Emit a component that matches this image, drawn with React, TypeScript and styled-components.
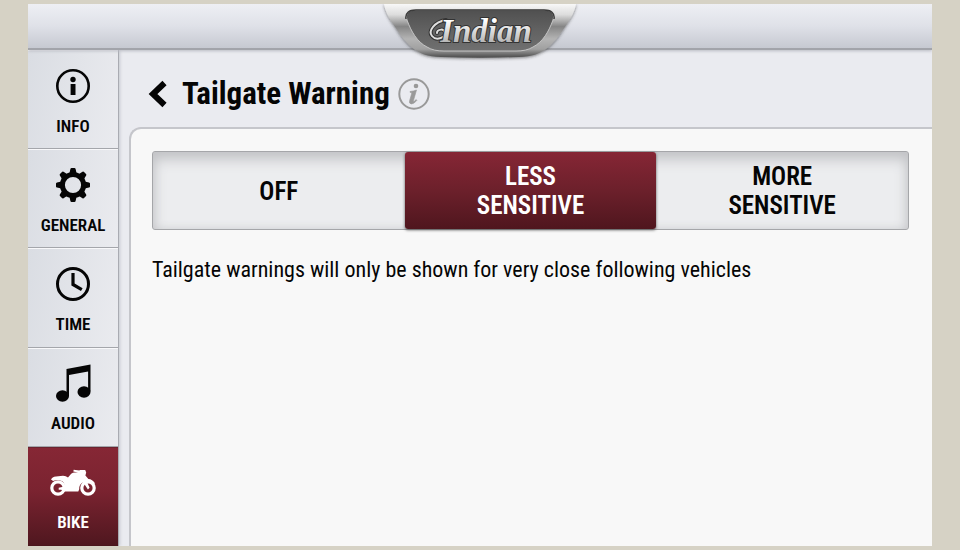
import React, { useState } from "react";
import styled, { createGlobalStyle, css } from "styled-components";

const GlobalStyle = createGlobalStyle`
  *, *::before, *::after { box-sizing: border-box; }
  body {
    margin: 0;
    background: #d6d2c5;
    color: #050505;
    font-family: "Roboto Condensed", "Arial Narrow", "Roboto", sans-serif;
  }
  button { font: inherit; color: inherit; border: 0; background: none; padding: 0; cursor: pointer; }
`;

const Page = styled.div`
  min-height: 100vh;
  padding: 4px 28px;
  display: flex;
`;

const Device = styled.div`
  flex: 1;
  min-width: 0;
  display: flex;
  flex-direction: column;
  overflow: hidden;
  background: #eaebf0;
`;

const TopBar = styled.header`
  position: relative;
  z-index: 1;
  height: 46px;
  display: flex;
  justify-content: center;
  background: linear-gradient(#eeeff4, #dfe1e8 50%, #c6c9d1);
  border-bottom: 2px solid #a2a4aa;
  box-shadow: 0 1px 3px #b9bbc2;
`;

const Badge = styled.svg`
  flex: none;
  width: 204px;
  height: 60px;
  overflow: visible;
`;

const Body = styled.div`
  flex: 1;
  display: flex;
`;

const Sidebar = styled.nav`
  flex: none;
  width: 91px;
  display: flex;
  flex-direction: column;
  border-right: 1px solid #a9abb2;
  box-shadow: 1px 0 3px #c6c8cf;
`;

const NavButton = styled.button<{ $active?: boolean }>`
  flex: 1;
  display: flex;
  flex-direction: column;
  align-items: center;
  justify-content: center;
  gap: 10px;
  padding-top: 2px;
  font-size: 17px;
  line-height: 20px;
  font-weight: 600;
  background: linear-gradient(100deg, #dadde3, #eaebef);
  border-top: 1px solid #f8f8fa;
  border-bottom: 1px solid #a4a6ab;
  ${(p) =>
    p.$active &&
    css`
      color: #fff;
      background: linear-gradient(#862735, #7a2330 45%, #4f171f);
      border-top-color: #6b2430;
      border-bottom-color: #4b161d;
    `}
`;

const NavIcon = styled.svg`
  width: 46px;
  height: 40px;
`;

const Main = styled.main`
  flex: 1;
  min-width: 0;
  display: flex;
  flex-direction: column;
  padding-left: 10px;
`;

const TitleBar = styled.div`
  height: 77px;
  display: flex;
  align-items: center;
  padding: 10px 18px 0;
`;

const IconButton = styled.button`
  display: flex;
`;

const Title = styled.h1`
  margin: 0 8px 0 15px;
  font-size: 31px;
  line-height: 40px;
  font-weight: 700;
`;

const Panel = styled.section`
  flex: 1;
  padding: 22px 23px 22px 21px;
  background: #f8f8f8;
  border: 2px solid #c5c6cb;
  border-width: 2px 0 0 2px;
  border-radius: 12px 0 0 0;
`;

const Segments = styled.div`
  display: grid;
  grid-template-columns: repeat(3, 1fr);
  height: 79px;
  border: 1px solid #a5a6a9;
  border-radius: 3px;
  background: #ecedef;
  box-shadow: inset 0 7px 14px #c1c2c5, inset 0 0 10px #d6d7da;
`;

const Segment = styled.button<{ $active: boolean }>`
  display: flex;
  align-items: center;
  justify-content: center;
  padding: 1px 60px 0;
  font-size: 25px;
  line-height: 29px;
  font-weight: 600;
  ${(p) =>
    p.$active &&
    css`
      color: #fff;
      border-radius: 3px;
      background: linear-gradient(#862635, #6c202b 50%, #4f161e);
      box-shadow: 0 1px 3px #555;
    `}
`;

const Description = styled.p`
  margin: 24px 0 0;
  font-size: 22px;
  line-height: 32px;
`;

const GEAR_TEETH = [0, 45, 90, 135, 180, 225, 270, 315];

const InfoIcon = () => (
  <NavIcon viewBox="0 0 46 40" aria-hidden="true">
    <circle cx="23" cy="20" r="15.7" fill="none" stroke="currentColor" strokeWidth="2.6" />
    <circle cx="23" cy="13.5" r="2.7" fill="currentColor" />
    <path d="M20.6 18h4.9v11h-4.9z" fill="currentColor" />
  </NavIcon>
);

const GearIcon = () => (
  <NavIcon viewBox="0 0 46 40" aria-hidden="true">
    <circle cx="23" cy="20" r="10.6" fill="none" stroke="currentColor" strokeWidth="5" />
    {GEAR_TEETH.map((a) => (
      <path
        key={a}
        d="M19.4 8.5 20.4 4Q20.6 3 21.6 3h2.8q1 0 1.2 1l1 4.5z"
        fill="currentColor"
        transform={`rotate(${a} 23 20)`}
      />
    ))}
  </NavIcon>
);

const ClockIcon = () => (
  <NavIcon viewBox="0 0 46 40" aria-hidden="true">
    <circle cx="23" cy="20" r="15.5" fill="none" stroke="currentColor" strokeWidth="3" />
    <path d="M23 9v11.5l8.8 5.2" fill="none" stroke="currentColor" strokeWidth="3.2" />
  </NavIcon>
);

const MusicIcon = () => (
  <NavIcon viewBox="0 0 46 40" aria-hidden="true">
    <path d="M16.5 6 40.5 1.5v27h-2.4V8.5L19 12v21h-2.5z" fill="currentColor" />
    <ellipse cx="12.5" cy="33" rx="6.5" ry="5.8" fill="currentColor" />
    <ellipse cx="34" cy="29" rx="6.5" ry="5.8" fill="currentColor" />
  </NavIcon>
);

const BikeIcon = () => (
  <NavIcon viewBox="0 0 46 40" aria-hidden="true">
    <circle cx="8" cy="26" r="6.2" fill="none" stroke="currentColor" strokeWidth="3.2" />
    <circle cx="38" cy="26" r="6.2" fill="none" stroke="currentColor" strokeWidth="3.2" />
    <path
      d="M1 17.5q1-2.7 5-3.1l7-.7q3 .2 5 1.7l3.2-3.7q2-1.6 5.3-1.1L28 10.5l-4.7-1 .4-1.7 5.8.8.3-.7h5.4l1 2.5-.8 3 3 3.7q4 .2 6.6 4.2l-.8.7q-3.4-2.3-6.8-1.2l2.2 5-1.7 1.6-4.7-7.1q-4.3 2-4 7l-.9 2.2H13.4l-2.1-1.7H8.7v-2l5.7-1.4q.3-4.5-3.3-5.6-3.7-1.6-8 .3z"
      fill="currentColor"
    />
  </NavIcon>
);

const IndianBadge = () => (
  <Badge viewBox="0 0 204 60" role="img" aria-label="Indian">
    <defs>
      <linearGradient id="rim" x1="0" y1="0" x2="0" y2="1">
        <stop offset="0" stopColor="#f8f8f8" />
        <stop offset=".2" stopColor="#dcdcdc" />
        <stop offset=".42" stopColor="#858585" />
        <stop offset=".65" stopColor="#b4b4b4" />
        <stop offset=".84" stopColor="#a0a0a0" />
        <stop offset="1" stopColor="#4a4a4a" />
      </linearGradient>
      <linearGradient id="plate" x1="0" y1="0" x2="0" y2="1">
        <stop offset="0" stopColor="#505050" />
        <stop offset=".5" stopColor="#626262" />
        <stop offset="1" stopColor="#707070" />
      </linearGradient>
      <linearGradient id="script" x1="0" y1="0" x2="0" y2="1">
        <stop offset=".2" stopColor="#ffffff" />
        <stop offset=".85" stopColor="#b2b2b2" />
      </linearGradient>
      <filter id="badgeShadow" x="-10%" y="-10%" width="120%" height="140%">
        <feDropShadow dx="0" dy="1" stdDeviation="1.5" floodColor="#333" floodOpacity=".6" />
      </filter>
    </defs>
    <path
      d="M6 0h192c-1 7-5 14-9 20-12 18-22 33-48 33-26 1-52 1-78 0-26 0-36-15-48-33C11 14 7 7 6 0z"
      fill="url(#rim)"
      filter="url(#badgeShadow)"
    />
    <path
      d="M38 6h128c8 0 11 4 9 10-4 11-10 22-20 27-5 3-10 4-17 4H66c-7 0-12-1-17-4-10-5-16-16-20-27-2-6 1-10 9-10z"
      fill="url(#plate)"
      stroke="#c4c4c4"
      strokeWidth="1"
    />
    <path d="M28 15c-1-6 3-9 10-9h128c7 0 11 3 10 9" fill="none" stroke="#3b3b3b" strokeWidth="1.5" />
    <g fill="none" strokeLinecap="round">
      <path d="M68 16C56 18 50 27 54 32s13 2 13-3-8-4-8 0" stroke="#333" strokeWidth="4" />
      <path d="M68 16C56 18 50 27 54 32s13 2 13-3-8-4-8 0" stroke="#dedede" strokeWidth="2" />
    </g>
    <text
      x="108"
      y="38"
      textAnchor="middle"
      fontFamily="'Liberation Serif', serif"
      fontSize="33"
      fontStyle="italic"
      fontWeight="700"
      fill="url(#script)"
      stroke="#333"
      strokeWidth="2"
      paintOrder="stroke"
    >
      Indian
    </text>
  </Badge>
);

const NAV = [
  { label: "INFO", Icon: InfoIcon },
  { label: "GENERAL", Icon: GearIcon },
  { label: "TIME", Icon: ClockIcon },
  { label: "AUDIO", Icon: MusicIcon },
  { label: "BIKE", Icon: BikeIcon },
];

const LEVELS = ["OFF", "LESS SENSITIVE", "MORE SENSITIVE"];

export default function App() {
  const [section, setSection] = useState("BIKE");
  const [level, setLevel] = useState("LESS SENSITIVE");

  return (
    <Page>
      <GlobalStyle />
      <Device>
        <TopBar>
          <IndianBadge />
        </TopBar>
        <Body>
          <Sidebar>
            {NAV.map(({ label, Icon }) => (
              <NavButton key={label} $active={label === section} onClick={() => setSection(label)}>
                <Icon />
                {label}
              </NavButton>
            ))}
          </Sidebar>
          <Main>
            <TitleBar>
              <IconButton aria-label="Back">
                <svg width="20" height="28" viewBox="0 0 20 28">
                  <path d="M17.5 3 6 14l11.5 11" fill="none" stroke="currentColor" strokeWidth="6" />
                </svg>
              </IconButton>
              <Title>Tailgate Warning</Title>
              <IconButton aria-label="About this setting">
                <svg width="32" height="32" viewBox="0 0 32 32">
                  <circle cx="16" cy="16" r="14.7" fill="none" stroke="#999" strokeWidth="2" />
                  <circle cx="18" cy="8" r="2.3" fill="#999" />
                  <path
                    d="M12 13.5q3.5-.3 6.500-1.5l-3 10.5q-.3 1.3.7.8l2-1.7.7.7q-2.8 3.7-5.4 3.6-2.7-.2-1.9-3.2l2-7q.4-1.5-1.6-1.4z"
                    fill="#999"
                    stroke="#999"
                    strokeWidth=".6"
                  />
                </svg>
              </IconButton>
            </TitleBar>
            <Panel>
              <Segments role="group" aria-label="Tailgate warning sensitivity">
                {LEVELS.map((name) => (
                  <Segment
                    key={name}
                    $active={name === level}
                    aria-pressed={name === level}
                    onClick={() => setLevel(name)}
                  >
                    {name}
                  </Segment>
                ))}
              </Segments>
              <Description>Tailgate warnings will only be shown for very close following vehicles</Description>
            </Panel>
          </Main>
        </Body>
      </Device>
    </Page>
  );
}
